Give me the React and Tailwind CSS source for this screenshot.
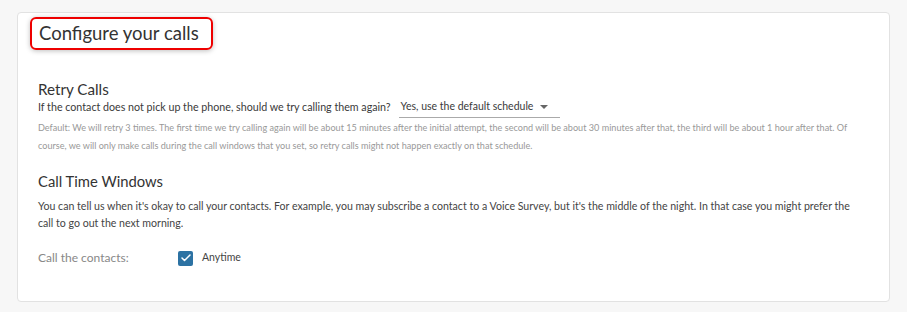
import { Check } from 'lucide-react'

const FONT = { fontFamily: 'Lato, "Liberation Sans", sans-serif' }

export default function App() {
  return (
    <div className="w-[907px] h-[312px] bg-[#f7f7f7] pt-[12px] pl-[17px] pr-[17px]" style={FONT}>
      <div className="h-[290px] bg-white border border-[#e2e2e2] rounded-[4px] pt-[4px] pl-[12px] pr-[20px]">
        {/* Title, highlighted */}
        <div className="w-[183px] border-2 border-[#ee0000] rounded-[6px] shadow-[0_1px_5px_rgba(0,0,0,0.25)] px-[7px] h-[33px] leading-[29px]">
          <h1 className="text-[18.5px] text-[#333]">Configure your calls</h1>
        </div>

        <div className="pl-[8px]">
          {/* Retry calls */}
          <h2 className="mt-[31px] text-[15.2px] leading-[16px] text-[#333]">Retry Calls</h2>
          <div className="flex items-center mt-[-1px] h-[22px]">
            <span className="text-[10.7px] text-[#3a3a3a]">
              If the contact does not pick up the phone, should we try calling them again?
            </span>
            <div className="ml-[8px] w-[161px] h-full border-b border-[#aaa] flex items-center justify-between pl-[2px] pr-[12px]">
              <span className="text-[10.5px] text-[#3a3a3a] whitespace-nowrap">Yes, use the default schedule</span>
              <span className="w-0 h-0 border-l-[4px] border-r-[4px] border-t-[4px] border-l-transparent border-r-transparent border-t-[#666]" />
            </div>
          </div>
          <p className="mt-[1px] text-[9.1px] leading-[18px] text-[#999]">
            Default: We will retry 3 times. The first time we try calling again will be about 15 minutes after the initial attempt, the second will be about 30 minutes after that, the third will be about 1 hour after that. Of course, we will only make calls during the call windows that you set, so retry calls might not happen exactly on that schedule.
          </p>

          {/* Call time windows */}
          <h2 className="mt-[18px] text-[14.8px] leading-[16px] text-[#333]">Call Time Windows</h2>
          <p className="mt-[9px] text-[10.6px] leading-[17px] text-[#444] pr-[10px]">
            You can tell us when it's okay to call your contacts. For example, you may subscribe a contact to a Voice Survey, but it's the middle of the night. In that case you might prefer the call to go out the next morning.
          </p>
          <div className="flex items-center mt-[18px] h-[16px]">
            <span className="w-[140px] text-[12px] text-[#888]">Call the contacts:</span>
            <span className="w-[15px] h-[15px] rounded-[2px] bg-[#2c72a3] flex items-center justify-center">
              <Check size={12} strokeWidth={3} color="#fff" />
            </span>
            <span className="ml-[9px] text-[10.5px] text-[#444]">Anytime</span>
          </div>
        </div>
      </div>
    </div>
  )
}
